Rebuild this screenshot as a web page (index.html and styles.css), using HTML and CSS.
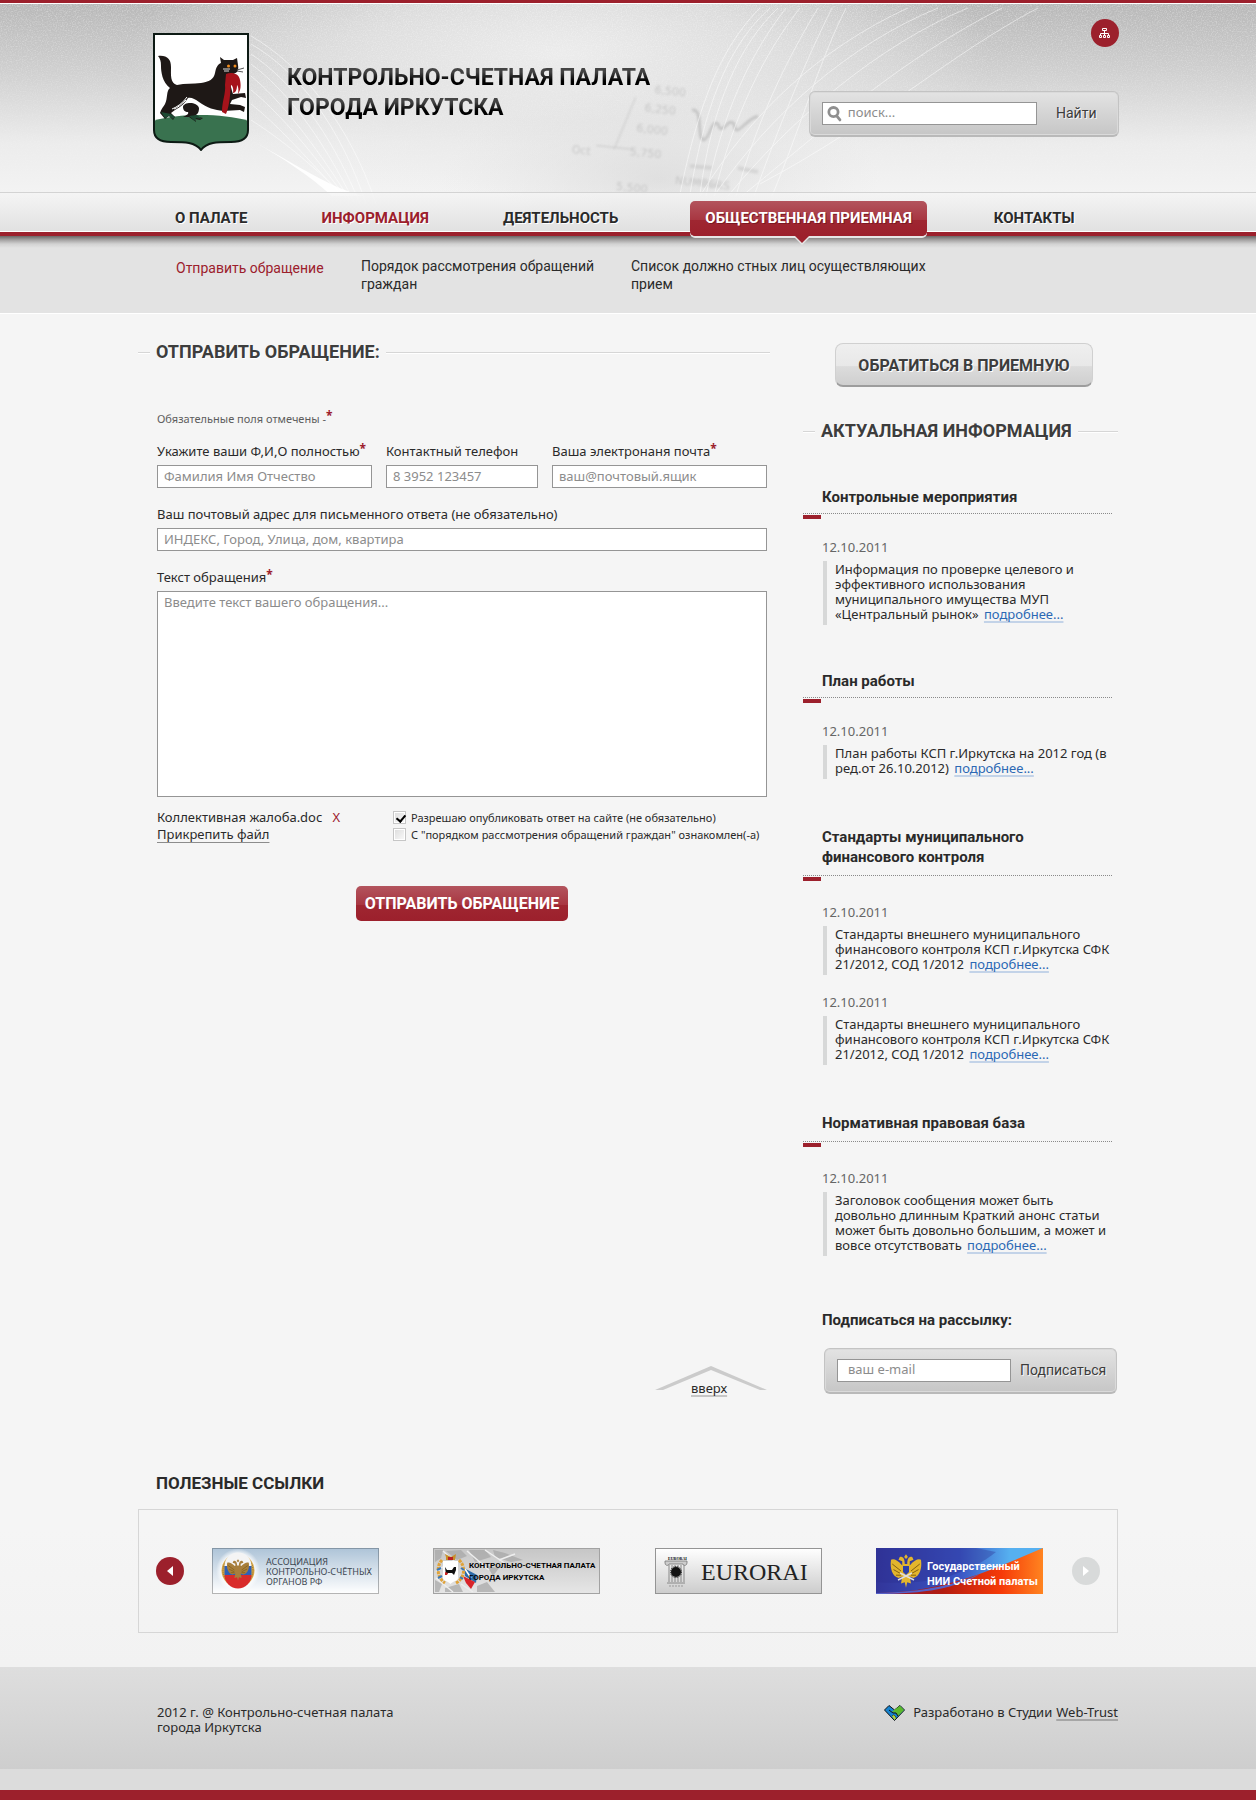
FILE: index.html
```
<!DOCTYPE html>
<html lang="ru">
<head>
    <meta charset="UTF-8">
    <meta name="viewport" content="width=device-width, initial-scale=1.0">
    <title>Контрольно-счетная палата города Иркутска</title>
    <link rel="stylesheet" href="styles.css">
</head>
<body>
    <header class="header">
        <svg class="header-bg" viewBox="0 0 1256 232" preserveAspectRatio="xMidYMin slice" aria-hidden="true">
            <defs>
                <linearGradient id="sky" x1="0" y1="0" x2="0" y2="1">
                    <stop offset="0" stop-color="#b8b8b8"/>
                    <stop offset="0.3" stop-color="#d0d0d0"/>
                    <stop offset="0.6" stop-color="#ececec"/>
                    <stop offset="0.85" stop-color="#f4f4f4"/>
                </linearGradient>
                <radialGradient id="glow">
                    <stop offset="0" stop-color="#ececec"/>
                    <stop offset="0.45" stop-color="#e8e8e8" stop-opacity="0.75"/>
                    <stop offset="1" stop-color="#eee" stop-opacity="0"/>
                </radialGradient>
                <radialGradient id="sheet">
                    <stop offset="0" stop-color="#ccc" stop-opacity="0.45"/>
                    <stop offset="1" stop-color="#ddd" stop-opacity="0"/>
                </radialGradient>
                <filter id="grain" x="0" y="0" width="100%" height="100%">
                    <feTurbulence type="fractalNoise" baseFrequency="0.8" numOctaves="2"/>
                    <feColorMatrix values="0 0 0 0 1  0 0 0 0 1  0 0 0 0 1  2 0 0 0 -0.85"/>
                </filter>
                <filter id="soft"><feGaussianBlur stdDeviation="1"/></filter>
                <linearGradient id="fade" x1="0" y1="0" x2="0" y2="1">
                    <stop offset="0" stop-color="#fff"/>
                    <stop offset="1" stop-color="#000"/>
                </linearGradient>
                <mask id="topmask"><rect width="1256" height="190" fill="url(#fade)"/></mask>
            </defs>
            <rect width="1256" height="232" fill="url(#sky)"/>
            <ellipse cx="560" cy="50" rx="430" ry="150" fill="url(#glow)"/>
            <rect width="1256" height="190" filter="url(#grain)" opacity="0.4" mask="url(#topmask)"/>
            <!-- Paper sheet -->
            <ellipse cx="660" cy="175" rx="220" ry="90" fill="url(#sheet)"/>
            <g filter="url(#soft)" fill="#999" opacity="0.4" font-family="DejaVu Sans" font-size="11">
                <g transform="rotate(6 660 110)">
                    <text x="652" y="90">6,500</text>
                    <text x="644" y="109">6,250</text>
                    <text x="638" y="130">6,000</text>
                    <text x="634" y="154">5,750</text>
                    <text x="576" y="158">Oct</text>
                    <text x="624" y="190">5,500</text>
                    <text x="682" y="178">NUMBERS</text>
                    <path d="M634 96 L618 150 M600 148 L636 148" fill="none" stroke="#999" stroke-width="1"/>
                </g>
                <path d="M692 106 C704 104 696 136 704 136 C710 134 712 114 718 120 C722 134 728 112 734 120 C736 136 744 116 758 112" fill="none" stroke="#999" stroke-width="3"/>
                <path d="M690 162 L712 164 M738 164 L758 168 M690 176 L720 182" fill="none" stroke="#bbb" stroke-width="4"/>
            </g>
            <!-- Light threads -->
            <g fill="none" stroke="#fff" stroke-width="1" opacity="0.5">
                <path d="M251 32 C300 60 350 120 376 200"/>
                <path d="M251 40 C296 66 340 120 366 200"/>
                <path d="M251 50 C290 76 330 126 360 200"/>
                <path d="M251 60 C286 86 320 130 354 198"/>
                <path d="M251 72 C280 96 312 136 350 196"/>
                <path d="M251 86 C276 106 306 140 346 194"/>
                <path d="M251 100 C274 118 300 146 342 192"/>
                <path d="M251 116 C276 132 302 152 338 186"/>
                <path d="M760 4 C724 40 700 92 680 190"/>
                <path d="M770 4 C730 40 706 96 690 190"/>
                <path d="M778 4 C740 40 712 100 700 190"/>
                <path d="M786 4 C750 50 722 110 706 192"/>
                <path d="M800 4 C764 50 734 110 714 192"/>
                <path d="M818 4 C784 60 756 120 736 192"/>
                <path d="M832 4 C804 60 780 120 754 192"/>
                <path d="M846 4 C818 60 802 120 772 192"/>
                <path d="M908 4 C820 44 750 110 700 192"/>
                <path d="M938 4 C850 40 770 110 714 192"/>
                <path d="M968 4 C880 40 790 116 728 192"/>
                <path d="M1002 4 C900 56 830 120 742 192"/>
                <path d="M1038 4 C950 50 880 116 760 180"/>
            </g>
            <path d="M249 135 C296 160 330 184 364 192 L332 192 C310 172 280 152 249 135Z" fill="#fff" opacity="0.9"/>
        </svg>
        <div class="container header-in">
            <a href="#" class="logo" aria-label="Герб Иркутска">
                <svg width="96" height="118" viewBox="0 0 96 118">
                    <defs><clipPath id="shield"><path d="M1 1H95V97C95 106 88 109 78 109C64 109 54 109 48 117C42 109 32 109 18 109C8 109 1 106 1 97Z"/></clipPath></defs>
                    <g clip-path="url(#shield)">
                        <rect width="96" height="118" fill="#fff"/>
                        <path d="M0 88C24 80 70 80 96 88V118H0Z" fill="#39724f"/>
                    </g>
                    <path d="M1 1H95V97C95 106 88 109 78 109C64 109 54 109 48 117C42 109 32 109 18 109C8 109 1 106 1 97Z" fill="none" stroke="#0d1a14" stroke-width="2"/>
                    <path d="M5 23C14 22 18 26 18 34C18 42 17 50 24 52C32 50 40 51 48 50C56 49 61 46 62 40C63 34 65 31 68 30L67 24L71 27H80L84 25L85 32C86 38 84 40 80 41L76 46L79 58L80 61L92 60L93 65L88 64L79 67L77 71L87 72L92 74L91 79L87 77L70 78C62 77 54 75 46 69C42 66 38 64 35 65C32 70 28 74 22 77L18 80L22 84L20 87L16 83L12 86L7 80C8 76 11 73 12 71C15 65 13 58 17 55C9 49 8 38 8 33C8 28 7 25 5 23Z" fill="#1e1816"/>
                    <path d="M30 74C30 69 44 68 46 75C46 80 44 82 41 83L50 85L47 87L42 86L43 89L36 84L30 84C34 82 36 81 35 79C32 79 30 77 30 74Z" fill="#1e1816"/>
                    <path d="M8 79L12 85L16 83L20 86L22 84L18 81ZM36 83L42 88L43 85L49 86L44 82Z" fill="#1d4a33"/>
                    <path d="M34 64C30 70 24 74 19 76M33 67C28 72 24 75 21 76" stroke="#fff" fill="none"/>
                    <path d="M73 41C78 39 86 40 87 47C88 52 88 57 85 61C86 56 85 53 84 52C84 56 83 60 80 60C81 55 79 52 78 52C77 60 77 72 73 81L69 79C69 68 73 60 72 52Z" fill="#a6131b"/>
                    <circle cx="75.500" cy="33" r="1.500" fill="#f28c1c"/><circle cx="82" cy="33" r="1.500" fill="#f28c1c"/>
                    <path d="M70 36H77M71 38H76" stroke="#ddd"/><path d="M84 37L91 35M84 38L90 39" stroke="#555"/>
                </svg>
            </a>
            <h1 class="title">КОНТРОЛЬНО-СЧЕТНАЯ ПАЛАТА<br>ГОРОДА ИРКУТСКА</h1>
            <div class="header-side">
                <a href="#" class="sitemap" aria-label="Карта сайта">
                    <svg width="12" height="12" viewBox="0 0 12 12" fill="none" stroke="#fff">
                        <path d="M3.500 1.500H7.500V3.500H3.500ZM0.500 8.500H2.500V10.500H0.500ZM4.500 8.500H6.500V10.500H4.500ZM8.500 8.500H10.500V10.500H8.500ZM5.500 4V8M1.500 8V6.500H9.500V8"/>
                    </svg>
                </a>
                <form class="panel search">
                    <label class="search-field">
                        <svg width="16" height="17" viewBox="0 0 16 17" fill="none" stroke="#8f8f8f">
                            <circle cx="7" cy="7" r="5" stroke-width="3"/>
                            <path d="M10.500 11L14 15.500" stroke-width="3" stroke-linecap="round"/>
                        </svg>
                        <input type="text" placeholder="поиск..." aria-label="Поиск">
                    </label>
                    <button type="submit" class="panel-btn">Найти</button>
                </form>
            </div>
        </div>
        <nav class="nav">
            <ul class="container nav-list">
                <li><a href="#">О ПАЛАТЕ</a></li>
                <li><a href="#" class="red">ИНФОРМАЦИЯ</a></li>
                <li><a href="#">ДЕЯТЕЛЬНОСТЬ</a></li>
                <li><a href="#" class="active">ОБЩЕСТВЕННАЯ ПРИЕМНАЯ</a></li>
                <li><a href="#">КОНТАКТЫ</a></li>
            </ul>
        </nav>
    </header>
    <div class="subnav">
        <ul class="container subnav-list">
            <li><a href="#" class="red">Отправить обращение</a></li>
            <li><a href="#">Порядок рассмотрения обращений граждан</a></li>
            <li><a href="#">Список должно стных лиц осуществляющих прием</a></li>
        </ul>
    </div>

    <main class="container main">
        <section class="content">
            <h2 class="heading">ОТПРАВИТЬ ОБРАЩЕНИЕ:</h2>
            <form class="appeal">
                <p class="note">Обязательные поля отмечены -<span class="star">*</span></p>
                <div class="fields">
                    <div class="field">
                        <label for="fio">Укажите ваши Ф,И,О полностью<span class="star">*</span></label>
                        <input type="text" id="fio" placeholder="Фамилия Имя Отчество">
                    </div>
                    <div class="field">
                        <label for="phone">Контактный телефон</label>
                        <input type="text" id="phone" placeholder="8 3952 123457">
                    </div>
                    <div class="field">
                        <label for="mail">Ваша электронаня почта<span class="star">*</span></label>
                        <input type="text" id="mail" placeholder="ваш@почтовый.ящик">
                    </div>
                </div>
                <div class="field">
                    <label for="address">Ваш почтовый адрес для письменного ответа (не обязательно)</label>
                    <input type="text" id="address" placeholder="ИНДЕКС, Город, Улица, дом, квартира">
                </div>
                <div class="field">
                    <label for="text">Текст обращения<span class="star">*</span></label>
                    <textarea id="text" placeholder="Введите текст вашего обращения..."></textarea>
                </div>
                <div class="extra">
                    <div class="files">
                        <div>Коллективная жалоба.doc <button type="button" class="remove">X</button></div>
                        <a href="#" class="attach">Прикрепить файл</a>
                    </div>
                    <div class="checks">
                        <label><input type="checkbox" checked> Разрешаю опубликовать ответ на сайте (не обязательно)</label>
                        <label><input type="checkbox"> С "порядком рассмотрения обращений граждан" ознакомлен(-а)</label>
                    </div>
                </div>
                <button type="submit" class="submit">ОТПРАВИТЬ ОБРАЩЕНИЕ</button>
            </form>
            <a href="#" class="up">
                <svg width="112" height="25" viewBox="0 0 112 25"><path d="M0 24L56 0L112 24H105L56 4L8 24Z" fill="#cbcbcb"/></svg>
                <span>вверх</span>
            </a>
        </section>

        <aside class="sidebar">
            <a href="#" class="contact">ОБРАТИТЬСЯ В ПРИЕМНУЮ</a>
            <h2 class="heading">АКТУАЛЬНАЯ ИНФОРМАЦИЯ</h2>
            <section class="news">
                <h3>Контрольные мероприятия</h3>
                <time>12.10.2011</time>
                <p>Информация по проверке целевого и эффективного использования муниципального имущества МУП «Центральный рынок» <a href="#">подробнее...</a></p>
            </section>
            <section class="news">
                <h3>План работы</h3>
                <time>12.10.2011</time>
                <p>План работы КСП г.Иркутска на 2012 год (в ред.от 26.10.2012) <a href="#">подробнее...</a></p>
            </section>
            <section class="news news-loose">
                <h3>Стандарты муниципального<br>финансового контроля</h3>
                <time>12.10.2011</time>
                <p>Стандарты внешнего муниципального финансового контроля КСП г.Иркутска СФК 21/2012, СОД 1/2012 <a href="#">подробнее...</a></p>
                <time>12.10.2011</time>
                <p>Стандарты внешнего муниципального финансового контроля КСП г.Иркутска СФК 21/2012, СОД 1/2012 <a href="#">подробнее...</a></p>
            </section>
            <section class="news news-loose">
                <h3>Нормативная правовая база</h3>
                <time>12.10.2011</time>
                <p>Заголовок сообщения может быть довольно длинным Краткий анонс статьи может быть довольно большим, а может и вовсе отсутствовать <a href="#">подробнее...</a></p>
            </section>
            <form class="subscribe">
                <label for="email">Подписаться на рассылку:</label>
                <div class="panel">
                    <input type="text" id="email" placeholder="ваш e-mail">
                    <button type="submit" class="panel-btn">Подписаться</button>
                </div>
            </form>
        </aside>
    </main>

    <section class="container links">
        <h2>ПОЛЕЗНЫЕ ССЫЛКИ</h2>
        <div class="slider">
            <button type="button" class="arrow" aria-label="Назад"><svg width="6" height="10" viewBox="0 0 6 10"><path d="M6 0V10L0 5Z" fill="#fff"/></svg></button>
            <div class="banners">
                <a href="#">
                    <svg width="167" height="46" viewBox="0 0 167 46">
                        <defs>
                            <linearGradient id="b1" x1="0" y1="0" x2="0" y2="1"><stop offset="0" stop-color="#aec4d8"/><stop offset="1" stop-color="#fff"/></linearGradient>
                            <linearGradient id="b1s" x1="0" y1="0" x2="0" y2="1"><stop offset="0" stop-color="#8496a6"/><stop offset="1" stop-color="#b4b4b4"/></linearGradient>
                            <radialGradient id="halo"><stop offset="0.7" stop-color="#fff"/><stop offset="1" stop-color="#fff" stop-opacity="0"/></radialGradient>
                            <g id="eagle">
                                <path d="M0 -12L1.500 -10L0 -8.500L-1.500 -10ZM-5 -10C-2 -11 -1 -8 -1 -5H1C1 -8 2 -11 5 -10L6 -8L3 -7L3 -4C7 -8 10 -9 12 -8C13 -2 11 4 6 5L3 4L4 9L1 8L0 12L-1 8L-4 9L-3 4L-6 5C-11 4 -13 -2 -12 -8C-10 -9 -7 -8 -3 -4L-3 -7L-6 -8Z"/>
                                <path d="M-11 -5L-4 0M-10 -1L-4 2M11 -5L4 0M10 -1L4 2M-8 3L-4 3M8 3L4 3" stroke="#7a5a10" stroke-width="0.700"/>
                            </g>
                        </defs>
                        <rect x="0.500" y="0.500" width="166" height="45" fill="url(#b1)" stroke="url(#b1s)"/>
                        <circle cx="26" cy="22.500" r="22" fill="url(#halo)"/>
                        <circle cx="26" cy="22.500" r="16.500" fill="#d7a748"/>
                        <circle cx="26" cy="22.500" r="15" fill="none" stroke="#8b6a2a" stroke-dasharray="1 1"/>
                        <path d="M12.500 18A13.500 13.500 0 0 1 39.500 18Z" fill="#f4f4f4"/>
                        <path d="M12.500 18H39.500V27H12.500Z" fill="#2f5fb5"/>
                        <path d="M12.500 27H39.500A13.500 13.500 0 0 1 12.500 27Z" fill="#d92b2b"/>
                        <use href="#eagle" transform="translate(26 22) scale(0.900)" fill="#a87f3c"/>
                        <g class="b-assoc"><text x="54" y="17">АССОЦИАЦИЯ</text><text x="54" y="27">КОНТРОЛЬНО-СЧЁТНЫХ</text><text x="54" y="37">ОРГАНОВ РФ</text></g>
                    </svg>
                </a>
                <a href="#">
                    <svg width="167" height="46" viewBox="0 0 167 46">
                        <defs>
                            <linearGradient id="b2" x1="0" y1="0" x2="0" y2="1"><stop offset="0" stop-color="#c6c6c6"/><stop offset="1" stop-color="#e6e6e6"/></linearGradient>
                        </defs>
                        <rect x="0.500" y="0.500" width="166" height="45" fill="url(#b2)" stroke="#a2a2a2"/>
                        <path d="M2 2H10L8 10L2 14ZM13 3L28 2L34 8L24 12ZM36 2H52L58 9L42 14ZM60 2L72 5L90 12L78 14L62 9ZM2 32L9 36L6 44H2ZM12 40L26 36L30 44H12ZM54 18L66 20L60 28ZM44 38L54 34L62 44H44Z" fill="#a5a5a5" opacity="0.7"/>
                        <path d="M10 3L22 14M34 3L56 22M52 2L76 18M3 24L14 16M3 30L20 44M28 36L40 44M66 12L82 6" stroke="#eee" fill="none" stroke-width="1.500"/>
                        <path d="M31 20L44 27L43 35L32 28Z" fill="#2c6aa8"/><path d="M30 28L42 34L38 41L33 35Z" fill="#d8242b"/><path d="M32 21L38 30" stroke="#fff" stroke-width="1.500"/>
                        <path d="M13 9L12 6L18 9L23 6L22 12H13Z" fill="#c8902a"/><rect x="15" y="9" width="5" height="3" fill="#b22"/>
                        <path d="M9 12C3 18 4 30 12 35M26 12C33 18 32 30 23 35" fill="none" stroke="#e0a33a" stroke-width="3" stroke-dasharray="3 1"/>
                        <path d="M4 22L8 20M5 30L9 28M28 20L31 22M27 29L30 31" stroke="#3b78b8" stroke-width="2"/>
                        <path d="M10 13H25V30C25 33 20 33 17.500 36C15 33 10 33 10 30Z" fill="#fff"/>
                        <path d="M12 19L14 22H19L21 19H23V22L21 27L19 25L15 25L13 27Z" fill="#111"/><path d="M12 24L15 25L14 27H12Z" fill="#c22"/>
                        <g class="b-ksp"><text x="36" y="20">КОНТРОЛЬНО-СЧЕТНАЯ ПАЛАТА</text><text x="36" y="32">ГОРОДА ИРКУТСКА</text></g>
                    </svg>
                </a>
                <a href="#">
                    <svg width="167" height="46" viewBox="0 0 167 46">
                        <defs>
                            <linearGradient id="b3" x1="0" y1="0" x2="0" y2="1"><stop offset="0" stop-color="#fff"/><stop offset="1" stop-color="#ccc"/></linearGradient>
                        </defs>
                        <rect x="0.500" y="0.500" width="166" height="45" fill="url(#b3)" stroke="#949494"/>
                        <text x="13" y="12" class="b-tiny">EURORAI</text>
                        <path d="M10 13H32V15C32 18 28 18 28 16H14C14 18 10 18 10 15Z" fill="#ccc" stroke="#777" stroke-width="0.800"/>
                        <path d="M14 17V34M17 17V34M20 17V34M23 17V34M26 17V34M29 17V34M12 35H30" stroke="#888"/>
                        <circle cx="21" cy="24" r="5" fill="#111"/><circle cx="21" cy="24" r="5.500" fill="none" stroke="#111" stroke-dasharray="1 1"/>
                        <path d="M14 38H28" stroke="#999" stroke-dasharray="2 1"/>
                        <text x="46" y="32" class="b-euro">EURORAI</text>
                    </svg>
                </a>
                <a href="#">
                    <svg width="167" height="46" viewBox="0 0 167 46">
                        <defs>
                            <linearGradient id="b4" x1="0" y1="0" x2="1" y2="0"><stop offset="0" stop-color="#32359a"/><stop offset="0.5" stop-color="#3a55c4"/><stop offset="0.8" stop-color="#56b0f0"/></linearGradient>
                            <linearGradient id="b4r" x1="0" y1="0" x2="1" y2="0"><stop offset="0" stop-color="#8e1a3a"/><stop offset="0.4" stop-color="#b31c10"/><stop offset="0.75" stop-color="#f63a08"/><stop offset="1" stop-color="#ff8420"/></linearGradient>
                        </defs>
                        <rect width="167" height="46" fill="url(#b4)"/>
                        <path d="M0 34C50 38 90 28 120 4L100 0H0Z" fill="#2c2f8e" opacity="0.35"/>
                        <path d="M0 45C70 44 115 22 167 0V46H0Z" fill="url(#b4r)"/>
                        <path d="M0 45C50 44 80 36 104 26C80 40 50 46 0 46Z" fill="#5560c8"/>
                        <use href="#eagle" transform="translate(30 23) scale(1.250 1.400)" fill="#e3b52c"/>
                        <path d="M27 18H33V24L30 27L27 24Z" fill="#2b3fa8"/><path d="M22 32L36 25M38 32L24 25" stroke="#ddd" stroke-width="1.500"/>
                        <g class="b-nii"><text x="51" y="22">Государственный</text><text x="51" y="37">НИИ Счетной палаты</text></g>
                    </svg>
                </a>
            </div>
            <button type="button" class="arrow arrow-off" aria-label="Вперед"><svg width="6" height="10" viewBox="0 0 6 10"><path d="M0 0V10L6 5Z" fill="#fff"/></svg></button>
        </div>
    </section>

    <footer class="footer">
        <div class="container footer-in">
            <p>2012 г. @ Контрольно-счетная палата<br>города Иркутска</p>
            <p class="studio">
                <svg width="21" height="16" viewBox="0 0 21 16">
                    <path d="M0.500 5L5 0.500L10.500 5L16 0.500L20.500 5L10.500 15.500Z" fill="#1583cf" stroke="#111"/>
                    <path d="M10 5L16 0.800L20 5L14 11L12 8L8 7Z" fill="#5cb82c"/>
                    <path d="M5 5L9 8L12 8L14 11M8 11L10 10L12 13" fill="none" stroke="#111"/><path d="M8 11L10 10L12 13L10.500 15Z" fill="#b8d832"/>
                </svg>
                Разработано в Студии <a href="#">Web-Trust</a>
            </p>
        </div>
    </footer>
</body>
</html>
```
FILE: styles.css
```
* {
    box-sizing: border-box;
}
body {
    margin: 0;
    background: linear-gradient(#f5f5f5 85%, #efefef);
    color: #2a2a2a;
    font: 13px/16px "Noto Sans", sans-serif;
}
h1, h2, h3, p, ul {
    margin: 0;
    padding: 0;
}
ul {
    list-style: none;
}
a {
    color: inherit;
    text-decoration: none;
}
svg {
    display: block;
}
button, input, textarea {
    font: inherit;
    border-radius: 0;
}
button {
    border: 0;
    padding: 0;
    background: none;
    cursor: pointer;
}
input[type=text], textarea {
    display: block;
    width: 100%;
    height: 23px;
    padding: 0 6px 2px;
    border: 1px solid #959595;
    background: #fff;
    outline: none;
}
::placeholder {
    color: #8c8c8c;
    opacity: 1;
}
.container {
    max-width: 980px;
    margin: 0 auto;
}
.red {
    color: #9c202c;
}

/* Header */
.header {
    position: relative;
    border-top: 3px solid #9c202c;
    box-shadow: inset 0 1px #fff;
}
.header-bg {
    position: absolute;
    top: 1px;
    left: 0;
    width: 100%;
    height: 228px;
}
.header-in {
    position: relative;
    display: flex;
    align-items: flex-start;
    height: 189px;
}
.logo {
    margin: 30px 38px 0 15px;
}
.title {
    margin-top: 60px;
    font: bold 23px/30px Roboto, sans-serif;
    background: linear-gradient(#444 30%, #000 60%) 0 0 / 100% 30px;
    -webkit-background-clip: text;
    background-clip: text;
    color: transparent;
}
.header-side {
    display: flex;
    flex-direction: column;
    align-items: flex-end;
    gap: 44px;
    margin: 16px -1px 0 auto;
}
.sitemap {
    display: flex;
    align-items: center;
    justify-content: center;
    width: 28px;
    height: 28px;
    border-radius: 50%;
    background: #9c202c;
}
.panel {
    display: flex;
    align-items: center;
    height: 46px;
    padding: 0 10px 1px 12px;
    border: 1px solid #c3c3c3;
    border-bottom: 2px solid #b9b9b9;
    border-radius: 6px;
    background: linear-gradient(#e3e3e3, #c6c6c6);
    box-shadow: inset 0 0 0 1px #dadada;
}
.panel-btn {
    color: #3c3c3c;
    font: 14px/20px Roboto, sans-serif;
    text-shadow: 1px 1px #f5f5f5;
}
.search {
    width: 310px;
    gap: 19px;
}
.search-field {
    display: flex;
    align-items: center;
    width: 215px;
    height: 23px;
    padding-left: 4px;
    border: 1px solid #959595;
    background: #fff;
}
.search-field input[type=text] {
    height: 21px;
    border: 0;
}

/* Menu */
.nav {
    position: relative;
    height: 44px;
    border-top: 1px solid #d3d3d3;
    border-bottom: 4px solid #9c202c;
    background: linear-gradient(rgba(245, 245, 245, 0.8), rgba(220, 220, 220, 0.8));
    box-shadow: inset 0 -1px #fff;
}
.nav-list {
    display: flex;
    gap: 50px;
    padding: 8px 0 0 25px;
    font: bold 15px/35px Roboto, sans-serif;
    text-shadow: 1px 1px #fff;
}
.nav a {
    display: block;
    padding: 0 12px;
}
.nav .active {
    position: relative;
    margin: 0 5px 0 10px;
    padding: 0 15px;
    border-radius: 5px;
    background: linear-gradient(#b3545d, #a83641 54%, #9f2631 55%, #9c202c);
    box-shadow: 0 2px #e6e6e6;
    color: #fff;
    text-shadow: 1px 1px #7c1821;
}
.nav .active::before, .nav .active::after {
    content: "";
    position: absolute;
    top: 35px;
    left: 50%;
    margin-left: -16px;
    border: 9px solid transparent;
    border-top-color: #e6e6e6;
    border-bottom: 0;
}
.nav .active::after {
    margin-left: -14px;
    border-width: 7px 7px 0;
    border-top-color: #9c202c;
}
.subnav {
    padding: 21px 0 20px;
    border-bottom: 1px solid #fff;
    background: linear-gradient(#6c6666, #a5a3a3 4px, #d2d2d2 8px, #e3e3e3 12px);
    font: 14px/18px Roboto, sans-serif;
}
.subnav-list {
    display: flex;
    padding-left: 38px;
}
.subnav li {
    width: 185px;
    padding-top: 2px;
}
.subnav li + li {
    width: 270px;
    padding: 0 30px 0 0;
}
.subnav li + li + li {
    width: 300px;
    padding-right: 0;
}

/* Content */
.main {
    display: grid;
    grid-template-columns: 1fr 315px;
    gap: 33px;
    padding-top: 26px;
}
.heading {
    display: flex;
    align-items: center;
    gap: 6px;
    color: #3d3d3d;
    font: bold 18px/24px Roboto, sans-serif;
    text-shadow: 1px 1px #fff;
}
.heading::before, .heading::after {
    content: "";
    width: 12px;
    height: 1px;
    background: #d6d6d6;
    box-shadow: 0 1px #fff;
}
.heading::after {
    flex: 1;
}
.content {
    display: flex;
    flex-direction: column;
}
.appeal {
    display: flex;
    flex-direction: column;
    gap: 18px;
    padding: 45px 3px 0 19px;
}
.note {
    margin-bottom: -4px;
    color: #5d5d5d;
    font-size: 11px;
    line-height: 20px;
}
.star {
    color: #9c202c;
    font-size: 12px;
    font-weight: bold;
    line-height: 0;
    vertical-align: 3px;
}
.fields {
    display: grid;
    grid-template-columns: 215fr 152fr 215fr;
    gap: 14px;
}
.field label {
    display: block;
    margin-bottom: 6px;
    white-space: nowrap;
}
.field textarea {
    height: 206px;
    padding: 2px 6px;
    resize: none;
}
.extra {
    display: flex;
    margin-top: -6px;
    line-height: 17px;
}
.files {
    width: 236px;
}
.remove {
    margin-left: 7px;
    color: #9c202c;
}
.attach {
    text-decoration: underline #8c8c8c;
    text-underline-offset: 3px;
    text-decoration-skip-ink: none;
}
.checks {
    font-size: 11px;
    white-space: nowrap;
}
.checks label {
    display: flex;
    align-items: center;
    gap: 5px;
}
.checks input {
    position: relative;
    width: 13px;
    height: 13px;
    margin: 0;
    appearance: none;
    border: 1px solid #c6c6c6;
    background: linear-gradient(135deg, #dcdcdc, #fafafa);
    box-shadow: inset 0 0 0 1px #fff;
}
.checks input:checked::after {
    content: "";
    position: absolute;
    top: 1px;
    left: 4px;
    width: 4px;
    height: 7px;
    border: solid #000;
    border-width: 0 2px 2px 0;
    transform: rotate(40deg);
}
.submit {
    align-self: center;
    height: 35px;
    margin-top: 25px;
    padding: 0 9px;
    border-radius: 5px;
    background: linear-gradient(#b3545d, #a83641 54%, #9f2631 55%, #9c202c);
    color: #fff;
    font: bold 16px/35px Roboto, sans-serif;
}
.up {
    position: relative;
    align-self: flex-end;
    margin: auto 3px 0 0;
    padding-bottom: 3px;
}
.up span {
    position: absolute;
    bottom: -2px;
    left: 36px;
    line-height: 16px;
}

/* Sidebar */
.contact {
    display: block;
    width: 258px;
    height: 44px;
    margin: 3px 0 32px 32px;
    border: 1px solid #d0d0d0;
    border-bottom: 2px solid #9d9d9d;
    border-radius: 8px;
    background: linear-gradient(#efefef, #e8e8e8 54%, #dcdcdc 55%, #cfcfcf);
    color: #3d3d3d;
    font: bold 16px/43px Roboto, sans-serif;
    text-align: center;
    text-shadow: 1px 1px #fff;
}
.news {
    margin-top: 46px;
}
.heading + .news {
    margin-top: 44px;
}
.news h3, .subscribe label {
    display: block;
    padding-left: 19px;
    font: bold 15px/20px Roboto, sans-serif;
}
.news h3 {
    position: relative;
    margin-right: 6px;
    padding-bottom: 6px;
    border-bottom: 1px dotted #8a8a8a;
}
.news h3::after {
    content: "";
    position: absolute;
    top: 100%;
    left: 0;
    width: 18px;
    height: 4px;
    margin-top: 2px;
    background: #9c202c;
}
.news time {
    display: block;
    margin: 19px 0 6px 19px;
    color: #666;
}
.news h3 + time {
    margin-top: 25px;
}
.news p {
    margin-left: 20px;
    padding: 1px 4px 3px 8px;
    border-left: 4px solid #d7d8d8;
    line-height: 15px;
}
.news p a {
    display: inline-block;
    margin-left: 2px;
    color: #2b68b4;
    text-decoration: underline 2px #c3d3e8;
}
.news p a, .up span, .studio a {
    text-underline-offset: 2px;
    text-decoration-skip-ink: none;
}
.up span {
    text-decoration: underline 2px #c6c6c6;
}
.news-loose {
    margin-top: 48px;
}
.news-loose h3 {
    padding-bottom: 8px;
}
.news-loose h3 + time {
    margin-top: 28px;
}
.subscribe {
    margin-top: 54px;
}
.subscribe .panel {
    gap: 9px;
    margin: 18px 1px 0 21px;
}
.subscribe input[type=text] {
    width: 174px;
    padding-left: 10px;
}

/* Useful links */
.links {
    margin-top: 77px;
}
.links h2 {
    padding-left: 18px;
    font: bold 17px/24px Roboto, sans-serif;
}
.slider {
    display: flex;
    align-items: center;
    height: 124px;
    margin-top: 14px;
    padding: 0 17px;
    border: 1px solid #d6d6d6;
}
.banners {
    display: flex;
    flex: 1;
    justify-content: space-between;
    padding: 0 29px 0 28px;
}
.arrow {
    display: flex;
    align-items: center;
    justify-content: center;
    width: 28px;
    height: 28px;
    border-radius: 50%;
    background: #9c202c;
}
.arrow-off {
    background: #d8dada;
}
.b-assoc {
    fill: #3e4852;
    font: 9px "Noto Sans", sans-serif;
}
.b-ksp {
    font: bold 8px Roboto, sans-serif;
}
.b-tiny {
    font: bold 4px "Liberation Serif", serif;
}
.b-euro {
    fill: #222;
    font: 24px "Liberation Serif", serif;
}
.b-nii {
    fill: #fff;
    font: bold 11px Roboto, sans-serif;
}

/* Footer */
.footer {
    margin-top: 34px;
    padding-bottom: 21px;
    border-bottom: 10px solid #9c202c;
    background: linear-gradient(#dedede, #cecece) 0 0 / 100% 102px no-repeat #dcdcdc;
}
.footer-in {
    display: flex;
    justify-content: space-between;
    padding: 38px 0 34px 19px;
    line-height: 15px;
}
.studio {
    display: flex;
    align-items: flex-start;
    gap: 4px;
}
.studio a {
    text-decoration: underline 2px #a6a6a6;
}
.studio svg {
    margin-right: 4px;
}
```
